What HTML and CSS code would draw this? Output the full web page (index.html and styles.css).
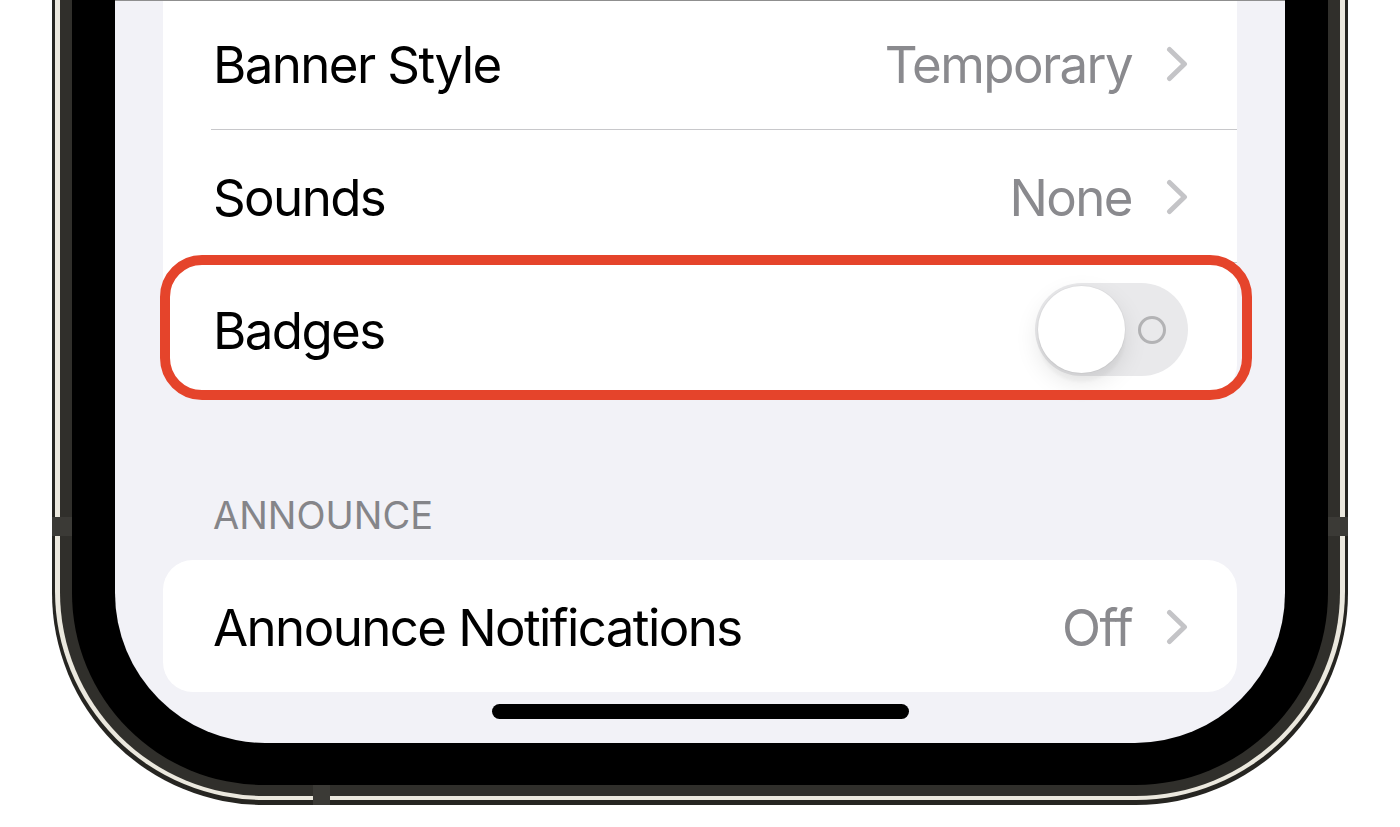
FILE: index.html
```html
<!DOCTYPE html>
<html lang="en">
<head>
<meta charset="utf-8">
<title>Notifications – Badges</title>
<link rel="stylesheet" href="styles.css">
</head>
<body>
<div class="phone">
  <div class="frame-outer">
    <div class="frame-stripe">
      <div class="frame-band">
        <div class="bezel">
          <div class="screen">
            <div class="card card-top">
              <div class="row">
                <span class="label">Banner Style</span>
                <span class="detail"><span class="value">Temporary</span>
                  <svg class="chevron" width="22" height="36" viewBox="0 0 22 36"><polyline points="3.5,3.5 18.5,18 3.5,32.5" fill="none" stroke="#c4c4c7" stroke-width="5" stroke-linecap="round" stroke-linejoin="round"/></svg>
                </span>
              </div>
              <div class="sep"></div>
              <div class="row">
                <span class="label">Sounds</span>
                <span class="detail"><span class="value">None</span>
                  <svg class="chevron" width="22" height="36" viewBox="0 0 22 36"><polyline points="3.5,3.5 18.5,18 3.5,32.5" fill="none" stroke="#c4c4c7" stroke-width="5" stroke-linecap="round" stroke-linejoin="round"/></svg>
                </span>
              </div>
              <div class="sep"></div>
              <div class="row">
                <span class="label">Badges</span>
                <span class="switch">
                  <span class="off-ring"></span>
                  <span class="knob"></span>
                </span>
              </div>
            </div>

            <div class="section-header">ANNOUNCE</div>

            <div class="card card-single">
              <div class="row">
                <span class="label">Announce Notifications</span>
                <span class="detail"><span class="value">Off</span>
                  <svg class="chevron" width="22" height="36" viewBox="0 0 22 36"><polyline points="3.5,3.5 18.5,18 3.5,32.5" fill="none" stroke="#c4c4c7" stroke-width="5" stroke-linecap="round" stroke-linejoin="round"/></svg>
                </span>
              </div>
            </div>

            <div class="home-indicator"></div>

            <div class="highlight"></div>
          </div>
        </div>
      </div>
    </div>
    <div class="antenna antenna-left"></div>
    <div class="antenna antenna-right"></div>
    <div class="antenna antenna-bottom"></div>
  </div>
</div>
</body>
</html>
```

FILE: styles.css
```css
html, body {
  margin: 0;
  padding: 0;
  background: #ffffff;
}

body {
  width: 1400px;
  height: 827px;
  overflow: hidden;
  font-family: "Inter", "Roboto", "Liberation Sans", sans-serif;
}

.phone {
  margin-left: 52px;
  width: 1296px;
}

.frame-outer {
  position: relative;
  background: #262521;
  padding: 0 3px 5px;
  border-radius: 0 0 212px 212px;
}

.frame-stripe {
  background: #ebe8de;
  padding: 0 5px 4px;
  border-radius: 0 0 209px 209px;
}

.frame-band {
  background: #302f2b;
  padding: 0 12px 11px;
  border-radius: 0 0 204px 204px;
}

.bezel {
  background: #000000;
  padding: 0 43px 42px;
  border-radius: 0 0 192px 192px;
}

.screen {
  position: relative;
  height: 743px;
  box-sizing: border-box;
  padding: 0 48px;
  background: #f2f2f7;
  border-radius: 0 0 150px 150px;
  overflow: hidden;
  display: flex;
  flex-direction: column;
}

.screen::before {
  content: "";
  position: absolute;
  left: 0;
  right: 0;
  top: 0;
  height: 1px;
  background: #8f8f8f;
}

.card {
  background: #ffffff;
  border-radius: 30px;
}

.card-top {
  margin-top: -3px;
  border-radius: 0 0 30px 30px;
}

.row {
  height: 132px;
  box-sizing: border-box;
  padding: 0 49px 0 50px;
  display: flex;
  align-items: center;
  justify-content: space-between;
}

.label {
  font-size: 51px;
  color: #000000;
  letter-spacing: -1.6px;
  padding-top: 3px;
}

.detail {
  display: flex;
  align-items: center;
  gap: 34px;
}

.value {
  font-size: 51px;
  color: #8a8a8e;
  letter-spacing: -1.6px;
  padding-top: 3px;
}

.chevron {
  display: block;
  margin-top: 1px;
}

.sep {
  height: 1px;
  margin-left: 48px;
  background: #c8c8cb;
}

.switch {
  position: relative;
  width: 153px;
  height: 93px;
  border-radius: 47px;
  background: #e9e9eb;
  flex: none;
}

.knob {
  position: absolute;
  left: 3px;
  top: 3px;
  width: 87px;
  height: 87px;
  border-radius: 50%;
  background: #ffffff;
  box-shadow: 0 9px 3px rgba(0, 0, 0, 0.03), 0 9px 24px rgba(0, 0, 0, 0.1), 0 0 0 1px rgba(0, 0, 0, 0.03);
}

.off-ring {
  position: absolute;
  left: 103px;
  top: 33px;
  width: 22px;
  height: 22px;
  border: 3px solid #b3b3b5;
  border-radius: 50%;
}

.section-header {
  margin: 98px 0 0;
  padding-left: 50px;
  height: 44px;
  line-height: 44px;
  font-size: 38px;
  color: #858589;
  letter-spacing: 0;
}

.card-single {
  margin-top: 23px;
}

.home-indicator {
  align-self: center;
  margin-top: 12px;
  width: 417px;
  height: 15px;
  border-radius: 8px;
  background: #000000;
}

.highlight {
  position: absolute;
  left: 45px;
  top: 255px;
  width: 1092px;
  height: 145px;
  box-sizing: border-box;
  border: 10px solid #e5442b;
  border-radius: 42px;
}

.antenna {
  position: absolute;
  background: #3b3a36;
}

.antenna-left {
  left: 0;
  top: 517px;
  width: 20px;
  height: 19px;
}

.antenna-right {
  right: 0;
  top: 517px;
  width: 20px;
  height: 19px;
}

.antenna-bottom {
  left: 261px;
  bottom: 0;
  width: 17px;
  height: 20px;
}
```
